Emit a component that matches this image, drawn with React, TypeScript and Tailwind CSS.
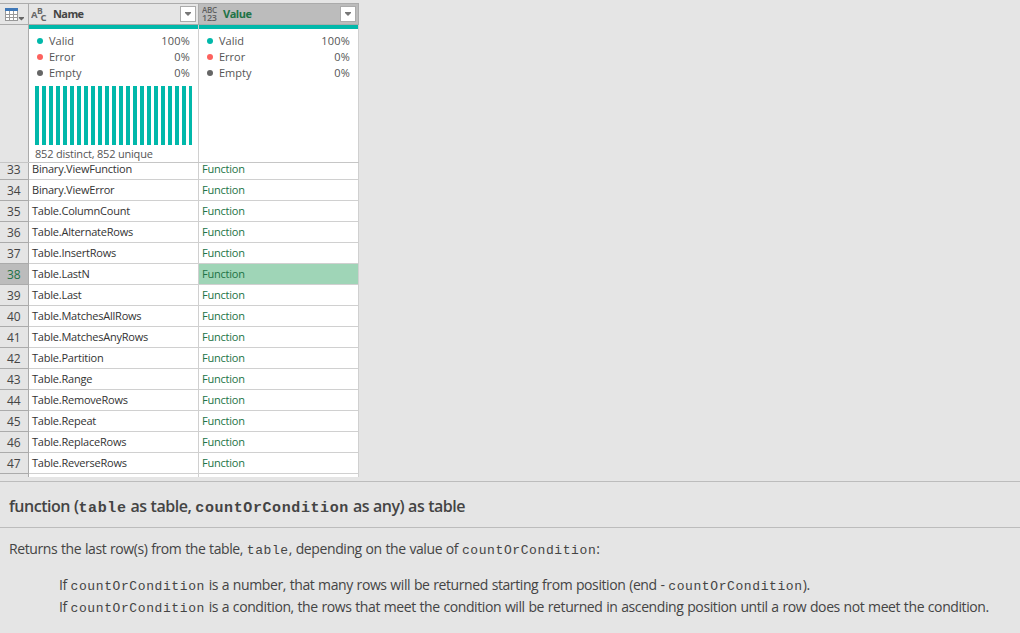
const names: [number, string][] = [
  [33, 'Binary.ViewFunction'],
  [34, 'Binary.ViewError'],
  [35, 'Table.ColumnCount'],
  [36, 'Table.AlternateRows'],
  [37, 'Table.InsertRows'],
  [38, 'Table.LastN'],
  [39, 'Table.Last'],
  [40, 'Table.MatchesAllRows'],
  [41, 'Table.MatchesAnyRows'],
  [42, 'Table.Partition'],
  [43, 'Table.Range'],
  [44, 'Table.RemoveRows'],
  [45, 'Table.Repeat'],
  [46, 'Table.ReplaceRows'],
  [47, 'Table.ReverseRows'],
];

const quality = [
  { label: 'Valid', value: '100%', dot: 'bg-[#01b8aa]' },
  { label: 'Error', value: '0%', dot: 'bg-[#fd625e]' },
  { label: 'Empty', value: '0%', dot: 'bg-[#666666]' },
];

function FilterButton() {
  return (
    <span className="flex h-4 w-4 shrink-0 items-center justify-center border border-[#ababab] bg-white">
      <svg width="6" height="4" viewBox="0 0 6 4">
        <path d="M0 0H6V1L3 4L0 1Z" fill="#777" />
      </svg>
    </span>
  );
}

function TableMenuIcon() {
  return (
    <svg width="20" height="14" viewBox="0 0 20 14" className="relative top-px">
      <g shapeRendering="crispEdges">
        <path d="M0 0H13V13H0Z" fill="#999" />
        <path d="M0 0H13V3H0Z" fill="#3f78b8" />
        <path d="M1 3H4V6H1ZM5 3H8V6H5ZM9 3H12V6H9ZM1 7H4V9H1ZM5 7H8V9H5ZM9 7H12V9H9ZM1 10H4V12H1ZM5 10H8V12H5ZM9 10H12V12H9Z" fill="#fff" />
      </g>
      <path d="M13.8 9H19V10L16.4 12.5L13.8 10Z" fill="#666" />
    </svg>
  );
}

function TextTypeIcon() {
  return (
    <svg width="17" height="18" viewBox="0 0 17 18" fill="#666" fontFamily="Open Sans" fontWeight="700">
      <text x="0" y="13" fontSize="9.5">A</text>
      <text x="6" y="8.5" fontSize="8.5">B</text>
      <text x="9.5" y="16" fontSize="9.5">C</text>
    </svg>
  );
}

function AnyTypeIcon() {
  return (
    <svg width="17" height="18" viewBox="0 0 17 18" fill="#606060" fontFamily="Open Sans" fontWeight="600">
      <text x="0" y="7.5" fontSize="8" textLength="15">ABC</text>
      <text x="0" y="16" fontSize="9" textLength="15">123</text>
    </svg>
  );
}

function Profile({ distribution }: { distribution?: boolean }) {
  return (
    <div className="h-[133px] border-t-4 border-[#01b8aa] pt-1">
      <div className="px-2">
        {quality.map((q) => (
          <div key={q.label} className="flex h-4 items-center text-[11px] text-[#555]">
            <span className={`h-1.5 w-1.5 rounded-full ${q.dot}`} />
            <span className="ml-1.5 grow">{q.label}</span>
            <span className="tracking-[0.2px]">{q.value}</span>
          </div>
        ))}
      </div>
      {distribution && (
        <div className="mt-[5px] ml-1.5">
          <div className="flex h-[59px] w-[157px] gap-[3px] overflow-hidden">
            {Array.from({ length: 23 }, (_, i) => (
              <span key={i} className="w-1 shrink-0 bg-[#01b8aa]" />
            ))}
          </div>
          <div className="pt-px text-[11px] leading-[15px] tracking-[-0.2px] text-[#555]">852 distinct, 852 unique</div>
        </div>
      )}
    </div>
  );
}

function Code({ children, title }: { children: string; title?: boolean }) {
  return (
    <code
      className={`font-['Liberation_Mono','Courier_New',monospace] leading-none tracking-[0.6px] ${title ? 'text-[15px]' : 'text-[13px]'}`}
    >
      {children}
    </code>
  );
}

export default function App() {
  return (
    <div className="flex h-[633px] w-[1020px] flex-col overflow-hidden bg-[#e5e5e5] font-['Open_Sans',sans-serif] text-[#444]">
      <div className="h-[477px] w-[359px] shrink-0 overflow-hidden pt-[3px]">
        <div className="flex h-[22px] border-y border-[#ababab]">
          <div className="flex w-[29px] items-center border-r border-[#ababab] pl-[5px]">
            <TableMenuIcon />
          </div>
          <div className="flex w-[170px] items-center border-r border-[#ababab] px-[2px]">
            <TextTypeIcon />
            <span className="ml-[5px] grow text-[11px] font-bold tracking-[-0.6px]">Name</span>
            <FilterButton />
          </div>
          <div className="flex w-[160px] items-center border-r border-[#ababab] bg-[#bcbcbc] pr-[2px] pl-[3px]">
            <AnyTypeIcon />
            <span className="ml-1 grow text-[11px] font-bold tracking-[-0.5px] text-[#217346]">Value</span>
            <FilterButton />
          </div>
        </div>
        <div className="flex h-[138px] border-b border-[#c6c6c6]">
          <div className="w-[29px] border-r border-[#ababab]" />
          <div className="w-[170px] border-r border-[#d0d0d0] bg-white">
            <Profile distribution />
          </div>
          <div className="w-[160px] border-r border-[#d0d0d0] bg-white">
            <Profile />
          </div>
        </div>
        <div className="h-[314px] overflow-hidden">
          <div className="-mt-1">
            {names.map(([n, name]) => (
              <div key={n} className="flex h-[21px] text-[11px] leading-5 tracking-[-0.22px] text-[#333]">
                <div className={`w-[29px] border-r border-b border-[#ababab] pl-[7px] text-xs leading-[21px] ${n === 38 ? 'bg-[#bcbcbc] text-[#217346]' : 'text-[#444]'}`}>{n}</div>
                <div className="w-[170px] border-r border-b border-[#d0d0d0] bg-white pl-[3px]">{name}</div>
                <div className={`w-[160px] border-r border-b border-[#d0d0d0] pl-[3px] text-[#217346] ${n === 38 ? 'bg-[#9fd5b7]' : 'bg-white'}`}>Function</div>
              </div>
            ))}
            <div className="flex h-[21px]">
              <div className="w-[29px] border-r border-[#ababab]" />
              <div className="w-[170px] border-r border-[#d0d0d0] bg-white" />
              <div className="w-[160px] border-r border-[#d0d0d0] bg-white" />
            </div>
          </div>
        </div>
      </div>
      <div className="mt-1 h-[47px] shrink-0 border-y border-[#bcbcbc] pl-[9px] text-base leading-[49px] font-semibold tracking-[-0.48px] whitespace-nowrap [word-spacing:0.3px]">
        function (<Code title>table</Code> as table, <Code title>countOrCondition</Code> as any) as table
      </div>
      <div className="pl-[9px] text-sm leading-[22px] tracking-[-0.4px] whitespace-nowrap [word-spacing:0.47px]">
        <p className="mt-[10px]">
          Returns the last row(s) from the table, <Code>table</Code>, depending on the value of <Code>countOrCondition</Code>:
        </p>
        <div className="mt-[14px] pl-[50px]">
          <p>
            If <Code>countOrCondition</Code> is a number, that many rows will be returned starting from position (end - <Code>countOrCondition</Code>).
          </p>
          <p>
            If <Code>countOrCondition</Code> is a condition, the rows that meet the condition will be returned in ascending position until a row does not meet the condition.
          </p>
        </div>
      </div>
    </div>
  );
}
